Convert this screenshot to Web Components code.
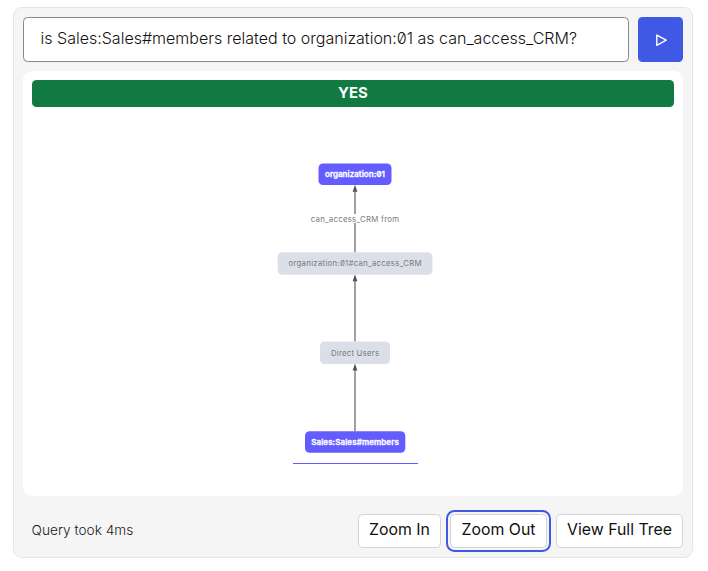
<!DOCTYPE html>
<html lang="en">
<head>
<meta charset="utf-8">
<title>Relationship query</title>
<style>
html,body{margin:0;background:#fff}
body{font-family:Inter,"Liberation Sans",sans-serif;font-size:16px;color:#1a1a1a;padding:7px 15px 0 13px}
</style>
</head>
<body>
<query-card>
  <query-input slot="query">is Sales:Sales#members related to organization:01 as can_access_CRM?</query-input>
  <run-button slot="query"></run-button>
  <result-banner slot="result">YES</result-banner>
  <relation-graph slot="result"></relation-graph>
  <query-status slot="footer">Query took 4ms</query-status>
  <tool-button slot="footer" style="--w:83px">Zoom In</tool-button>
  <tool-button slot="footer" focused style="--w:97px">Zoom Out</tool-button>
  <tool-button slot="footer" style="--w:127px">View Full Tree</tool-button>
</query-card>
<script>
const define = (name, html) => customElements.define(name, class extends HTMLElement {
  constructor() {
    super();
    this.attachShadow({ mode: 'open' }).innerHTML = html;
  }
});

define('query-card', `<style>
:host{display:flex;flex-direction:column;box-sizing:border-box;height:551px;padding:9px;background:#f5f5f5;border:1px solid #e5e5e5;border-radius:9px}
.query{display:flex;gap:9px;height:45px}
.result{display:flex;flex-direction:column;margin-top:9px;height:425px;background:#fff;border-radius:9px;overflow:hidden}
.footer{display:flex;align-items:center;gap:9px;margin-top:18px;height:34px;padding-left:8.5px}
</style>
<div class="query"><slot name="query"></slot></div>
<div class="result"><slot name="result"></slot></div>
<div class="footer"><slot name="footer"></slot></div>`);

define('query-input', `<style>
:host{flex:1;display:flex;align-items:center;box-sizing:border-box;padding:0 0 4px 16.5px;background:#fff;border:1px solid #86868b;border-radius:4.5px;font-weight:300;font-size:16.02px;color:#111;white-space:nowrap;font-feature-settings:"zero"}
</style><span><slot></slot></span>`);

define('run-button', `<style>
:host{display:flex;align-items:center;justify-content:center;width:45px;height:45px;background:#3f59e4;border-radius:4.5px}
svg{display:block}
</style>
<svg width="16" height="16" viewBox="0 0 16 16" fill="none" stroke="#fff" stroke-width="1.45" stroke-linejoin="round"><path d="M3.8 3.1v10.2l9.4-5.1z"/></svg>`);

define('result-banner', `<style>
:host{display:flex;align-items:center;justify-content:center;box-sizing:border-box;height:27px;margin:9px 9px 0;padding-bottom:2px;background:#117a41;border-radius:4.5px;color:#fff;font-size:15px;font-weight:700}
</style><span><slot></slot></span>`);

define('query-status', `<style>
:host{flex:1;padding-bottom:3px;font-size:13.7px;font-weight:300;color:#1a1a1a}
</style><slot></slot>`);

define('tool-button', `<style>
:host{display:flex;align-items:center;justify-content:center;box-sizing:border-box;width:var(--w);height:34px;padding-bottom:3px;background:#fff;border:1px solid #d4d4d4;border-radius:4.5px;font-size:15.85px;color:#111;white-space:nowrap}
:host([focused]){outline:2px solid #3f59e4;outline-offset:2px}
</style><span><slot></slot></span>`);

class RelationGraph extends HTMLElement {
  constructor() {
    super();
    const nodes = [
      { x: 318.5, y: 163.5, w: 73, h: 21.5, tx: 325, len: 60, base: 177, label: 'organization:01', main: true },
      { x: 277.7, y: 252.3, w: 154.7, h: 22.5, tx: 288.5, len: 133, base: 265.8, label: 'organization:01#can_access_CRM' },
      { x: 320, y: 341.5, w: 70, h: 22.5, tx: 331, len: 48, base: 355.6, label: 'Direct Users' },
      { x: 305, y: 431.3, w: 100.3, h: 21.5, tx: 311.2, len: 87.6, base: 445, label: 'Sales:Sales#members', main: true }
    ];
    const edges = [[252.3, 185.5], [341.5, 275], [431.3, 364.2]];
    this.attachShadow({ mode: 'open' }).innerHTML = `<style>
:host{display:block;height:389px}
svg{display:block}
text{font-size:7.8px;fill:#7a7a7a;font-feature-settings:"zero"}
.main{font-size:8px;fill:#fff;stroke:#fff;stroke-width:.3;font-weight:600}
.edge{stroke:#777;stroke-width:1.4}
.head{fill:#505050}
</style>
<svg width="660" height="389" viewBox="23 107 660 389">
${edges.map(([a, b]) => `<path class="edge" d="M355 ${a}V${b + 5}"/><path class="head" d="M355 ${b - .8}l2.4 7.4-2.4-.6-2.4.6z"/>`).join('')}
${nodes.map(n => `<rect x="${n.x}" y="${n.y}" width="${n.w}" height="${n.h}" rx="4.5" fill="${n.main ? '#635dff' : '#dbdfe8'}"/><text class="${n.main ? 'main' : ''}" x="${n.tx}" y="${n.base}" textLength="${n.len}">${n.label}</text>`).join('')}
<rect x="353" y="214" width="4" height="9" fill="#fff"/>
<text x="310.7" y="221.7" textLength="88.3">can_access_CRM from</text>
<path d="M293 463.5h125" stroke="#635dff"/>
</svg>`;
  }
}
customElements.define('relation-graph', RelationGraph);
</script>
</body>
</html>
